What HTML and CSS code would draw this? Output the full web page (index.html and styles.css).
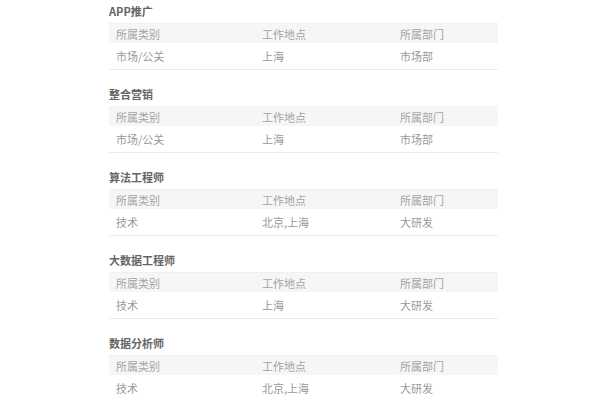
FILE: index.html
```html
<!DOCTYPE html>
<html lang="zh-CN">
<head>
<meta charset="utf-8">
<link rel="stylesheet" href="styles.css">
</head>
<body>
<div class="list">
  <section class="job">
    <h3 class="title">APP推广</h3>
    <div class="row head"><span>所属类别</span><span>工作地点</span><span>所属部门</span></div>
    <div class="row data"><span>市场/公关</span><span>上海</span><span>市场部</span></div>
  </section>
  <section class="job">
    <h3 class="title">整合营销</h3>
    <div class="row head"><span>所属类别</span><span>工作地点</span><span>所属部门</span></div>
    <div class="row data"><span>市场/公关</span><span>上海</span><span>市场部</span></div>
  </section>
  <section class="job">
    <h3 class="title">算法工程师</h3>
    <div class="row head"><span>所属类别</span><span>工作地点</span><span>所属部门</span></div>
    <div class="row data"><span>技术</span><span>北京,上海</span><span>大研发</span></div>
  </section>
  <section class="job">
    <h3 class="title">大数据工程师</h3>
    <div class="row head"><span>所属类别</span><span>工作地点</span><span>所属部门</span></div>
    <div class="row data"><span>技术</span><span>上海</span><span>大研发</span></div>
  </section>
  <section class="job">
    <h3 class="title">数据分析师</h3>
    <div class="row head"><span>所属类别</span><span>工作地点</span><span>所属部门</span></div>
    <div class="row data"><span>技术</span><span>北京,上海</span><span>大研发</span></div>
  </section>
</div>
</body>
</html>
```
FILE: styles.css
```css
html, body {
  margin: 0;
  padding: 0;
  background: #fff;
}
body {
  font-family: "Noto Sans CJK SC", "Noto Sans", sans-serif;
  font-size: 11px;
}
.list {
  width: 389px;
  margin-left: 109px;
}
.job {
  margin-bottom: 13px;
}
.title {
  margin: 0;
  height: 23px;
  line-height: 23px;
  font-size: 11px;
  font-weight: bold;
  color: #666;
}
.row {
  display: grid;
  grid-template-columns: 146px 138px 1fr;
  padding-left: 7px;
  align-items: center;
}
.head {
  height: 20px;
  background: #f6f6f6;
  color: #a3a3a3;
  border-top: 1px solid #f0f0f0;
  box-sizing: border-box;
}
.data {
  height: 27px;
  color: #999;
  border-bottom: 1px solid #ebebeb;
  box-sizing: border-box;
}
```
